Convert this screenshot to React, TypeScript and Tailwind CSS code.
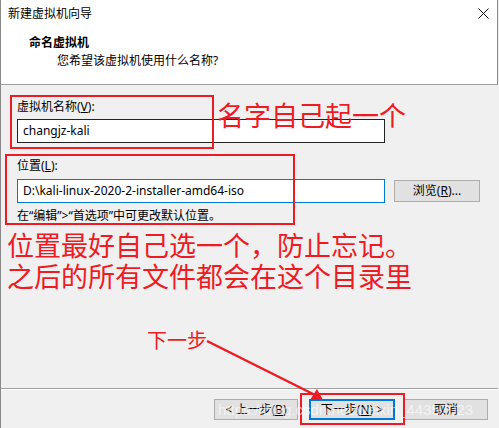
const ui = "font-['Noto_Sans','Noto_Sans_CJK_SC',sans-serif] text-[12px] leading-[16px] text-black";
const red = "font-['Noto_Sans_CJK_SC',sans-serif] text-[#ed1c24]";

function Btn({ children, primary }: { children: React.ReactNode; primary?: boolean }) {
  return (
    <div
      className={
        "h-[21px] flex items-center justify-center bg-[#e1e1e1] " +
        (primary ? "w-[86px] border-2 border-[#0078d7]" : "w-[84px] border border-[#adadad]")
      }
    >
      {children}
    </div>
  );
}

export default function App() {
  return (
    <div className={"relative w-[499px] h-[428px] bg-[#f0f0f0] border-l border-[#8a8a8a] overflow-hidden flex flex-col " + ui}>
      {/* header */}
      <div className="h-[85px] bg-white border-b border-[#a0a0a0] border-r border-r-[#8a8a8a] mr-[1px]">
        <div className="h-[27px] flex items-center justify-between pl-[7px] pr-[8px]">
          <span>新建虚拟机向导</span>
          <svg width="11" height="11" viewBox="0 0 11 11">
            <path d="M0.5 0.5 L10.5 10.5 M10.5 0.5 L0.5 10.5" stroke="#111" strokeWidth="1" />
          </svg>
        </div>
        <div className="pl-[28px] mt-[8px] font-bold">命名虚拟机</div>
        <div className="pl-[56px] mt-[2px]">您希望该虚拟机使用什么名称?</div>
      </div>

      {/* body */}
      <div className="pl-[16px] pt-[14px] flex flex-col">
        <div>
          虚拟机名称(<span className="underline">V</span>):
        </div>
        <div className="mt-[4px] w-[368px] h-[24px] bg-white border border-[#222] flex items-center px-[5px]">
          changjz-kali
        </div>
        <div className="mt-[15px]">
          位置(<span className="underline">L</span>):
        </div>
        <div className="mt-[5px] flex items-center">
          <div className="w-[368px] h-[24px] bg-white border border-[#0078d7] flex items-center px-[5px]">
            D:\kali-linux-2020-2-installer-amd64-iso
          </div>
          <div className="ml-[9px] w-[86px] h-[22px] bg-[#e1e1e1] border border-[#adadad] flex items-center justify-center">
            浏览(<span className="underline">R</span>)...
          </div>
        </div>
        <div className="mt-[5px]">在“编辑”&gt;“首选项”中可更改默认位置。</div>
      </div>

      <div className="flex-1" />
      <div className="h-px bg-[#a0a0a0] mr-[1px]" />
      <div className="h-px bg-white" />
      <div className="h-[38px] flex items-start pt-[9px] pl-[213px]">
        <Btn>
          &lt; 上一步(<span className="underline">B</span>)
        </Btn>
        <div className="ml-[11px]">
          <Btn primary>
            下一步(<span className="underline">N</span>) &gt;
          </Btn>
        </div>
        <div className="ml-[9px]">
          <Btn>取消</Btn>
        </div>
      </div>

      {/* annotations drawn over the dialog */}
      <div className="absolute left-[9px] top-[95px] w-[204px] h-[54px] border-2 border-[#ed1c24]" />
      <div className="absolute left-[4px] top-[154px] w-[290px] h-[71px] border-2 border-[#ed1c24]" />
      <div className={"absolute left-[216px] top-[99px] text-[27px] leading-[31px] " + red}>名字自己起一个</div>
      <div className={"absolute left-[6px] top-[229px] text-[27px] leading-[31px] " + red}>
        <div>位置最好自己选一个，防止忘记。</div>
        <div>之后的所有文件都会在这个目录里</div>
      </div>
      <div className={"absolute left-[146px] top-[328px] text-[20px] leading-[24px] " + red}>下一步</div>
      <div className="absolute left-[299px] top-[393px] w-[105px] h-[32px] border-2 border-[#ed1c24]" />
      <svg className="absolute left-0 top-0 pointer-events-none" width="499" height="428" viewBox="0 0 499 428">
        <line x1="206" y1="341" x2="314" y2="395" stroke="#ed1c24" strokeWidth="2.5" />
        <polygon points="322,400 309,400 316,389" fill="#ed1c24" />
      </svg>
      <div className="absolute left-[217px] top-[400px] font-['Liberation_Sans',sans-serif] text-[15px] leading-[20px] text-white/60 whitespace-nowrap pointer-events-none">
        https://blog.csdn.net/weixin_44357023
      </div>
    </div>
  );
}
